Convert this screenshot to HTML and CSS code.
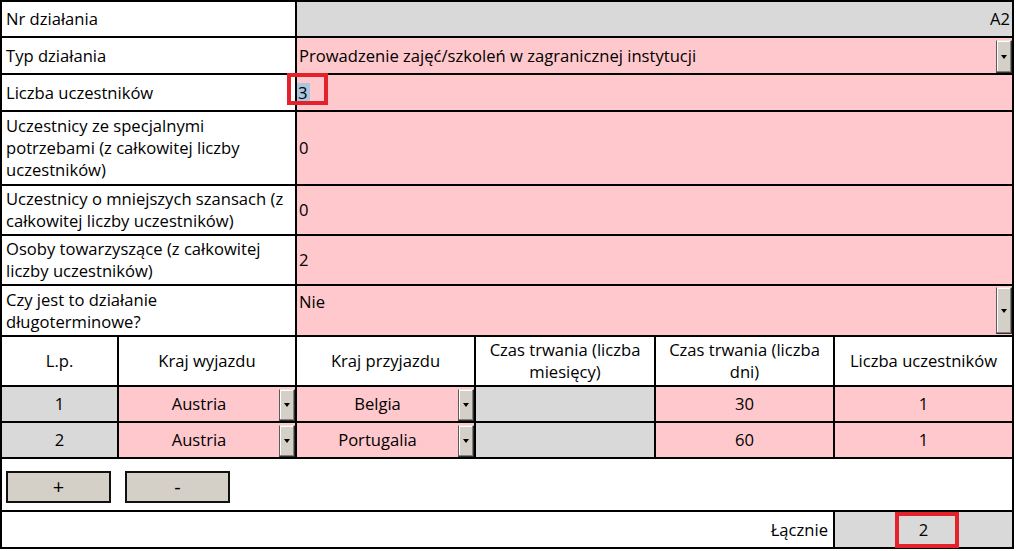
FILE: index.html
```html
<!DOCTYPE html>
<html lang="pl">
<head>
<meta charset="utf-8">
<title>Działanie</title>
<link rel="stylesheet" href="styles.css">
</head>
<body>
<div class="sheet">
  <div class="cell label">Nr działania</div>
  <div class="cell value gray end">A2</div>

  <div class="cell label">Typ działania</div>
  <div class="cell value pink select"><span class="txt">Prowadzenie zajęć/szkoleń w zagranicznej instytucji</span><span class="drop"></span></div>

  <div class="cell label">Liczba uczestników</div>
  <div class="cell value pink host nopad"><span class="sel">3</span><span class="mark mark-a"></span></div>

  <div class="cell label">Uczestnicy ze specjalnymi<br>potrzebami (z całkowitej liczby<br>uczestników)</div>
  <div class="cell value pink">0</div>

  <div class="cell label">Uczestnicy o mniejszych szansach (z<br>całkowitej liczby uczestników)</div>
  <div class="cell value pink">0</div>

  <div class="cell label">Osoby towarzyszące (z całkowitej<br>liczby uczestników)</div>
  <div class="cell value pink">2</div>

  <div class="cell label">Czy jest to działanie<br>długoterminowe?</div>
  <div class="cell value pink select top"><span class="txt">Nie</span><span class="drop tall"></span></div>

  <div class="cell head">L.p.</div>
  <div class="cell head">Kraj wyjazdu</div>
  <div class="cell head">Kraj przyjazdu</div>
  <div class="cell head">Czas trwania (liczba<br>miesięcy)</div>
  <div class="cell head">Czas trwania (liczba<br>dni)</div>
  <div class="cell head">Liczba uczestników</div>

  <div class="cell num gray">1</div>
  <div class="cell pink select mid"><span class="txt">Austria</span><span class="drop"></span></div>
  <div class="cell pink select mid"><span class="txt">Belgia</span><span class="drop"></span></div>
  <div class="cell gray"></div>
  <div class="cell num pink">30</div>
  <div class="cell num pink">1</div>

  <div class="cell num gray">2</div>
  <div class="cell pink select mid"><span class="txt">Austria</span><span class="drop"></span></div>
  <div class="cell pink select mid"><span class="txt">Portugalia</span><span class="drop"></span></div>
  <div class="cell gray"></div>
  <div class="cell num pink">60</div>
  <div class="cell num pink">1</div>

  <div class="cell buttons"><button class="btn" type="button">+</button><button class="btn" type="button">-</button></div>

  <div class="cell total-label">Łącznie</div>
  <div class="cell num gray host">2<span class="mark mark-b"></span></div>
</div>
</body>
</html>
```
FILE: styles.css
```css
html, body {
  margin: 0;
  padding: 0;
  background: #ffffff;
}

body {
  font-family: "Open Sans", "Noto Sans", sans-serif;
  font-size: 16.6px;
  color: #000000;
}

.sheet {
  display: grid;
  grid-template-columns: 117px 178px 179px 180px 179px 179px;
  grid-template-rows: 36px 37px 37px 74px 50px 50px 51px 50px 36px 36px 53px 37px;
  width: max-content;
  margin: 0;
  border-top: 2px solid #000;
  border-left: 2px solid #000;
}

.cell {
  display: flex;
  align-items: center;
  border-right: 2px solid #000;
  border-bottom: 2px solid #000;
  line-height: 22px;
  white-space: nowrap;
  min-width: 0;
}

.label {
  grid-column: span 2;
  padding-left: 4px;
}

.value {
  grid-column: span 4;
  padding-left: 2px;
}

.value.nopad {
  padding-left: 0;
}

.end {
  justify-content: flex-end;
  padding-right: 2px;
}

.pink {
  background: #ffc8cc;
}

.gray {
  background: #d9d9d9;
}

.select .txt {
  flex: 1;
}

.select.mid .txt {
  text-align: center;
}

.select.top {
  align-items: flex-start;
}

.select.top .txt {
  padding-top: 5px;
}

.drop {
  align-self: stretch;
  flex: none;
  width: 16px;
  margin-top: 2px;
  box-sizing: border-box;
  background: #d4d0c8;
  border: 1px solid;
  border-color: #e8e6e0 #303030 #303030 #5a5a5a;
  box-shadow: inset -1px -1px 0 #808080, inset 1px 1px 0 #ffffff;
  display: flex;
  align-items: center;
  justify-content: center;
}

.drop::after {
  content: "";
  width: 0;
  height: 0;
  border-left: 3.5px solid transparent;
  border-right: 3.5px solid transparent;
  border-top: 4px solid #000;
}

.drop.tall {
  margin: 1px 0;
}

.head {
  justify-content: center;
  text-align: center;
}

.num {
  justify-content: center;
}

.buttons {
  grid-column: span 6;
  align-items: flex-start;
  gap: 14px;
  padding: 12px 0 0 4px;
}

.btn {
  width: 105px;
  height: 32px;
  margin: 0;
  padding: 0;
  background: #d4d0c8;
  border: 2px solid #111;
  border-radius: 0;
  font-family: inherit;
  font-size: 20px;
  color: #000;
  line-height: 1;
}

.total-label {
  grid-column: span 5;
  justify-content: flex-end;
  padding-right: 5px;
}

.host {
  position: relative;
}

.sel {
  display: inline-block;
  height: 19px;
  line-height: 19px;
  padding: 0 2px 0 1px;
  background: #a9c7df;
}

.mark {
  position: absolute;
  box-sizing: border-box;
  border: 3px solid #e3222b;
  pointer-events: none;
}

.mark-a {
  left: -10px;
  top: -2px;
  width: 41px;
  height: 32px;
  border-width: 4px;
}

.mark-b {
  left: 60px;
  top: 0;
  width: 64px;
  height: 36px;
  border-width: 4px;
}
```
